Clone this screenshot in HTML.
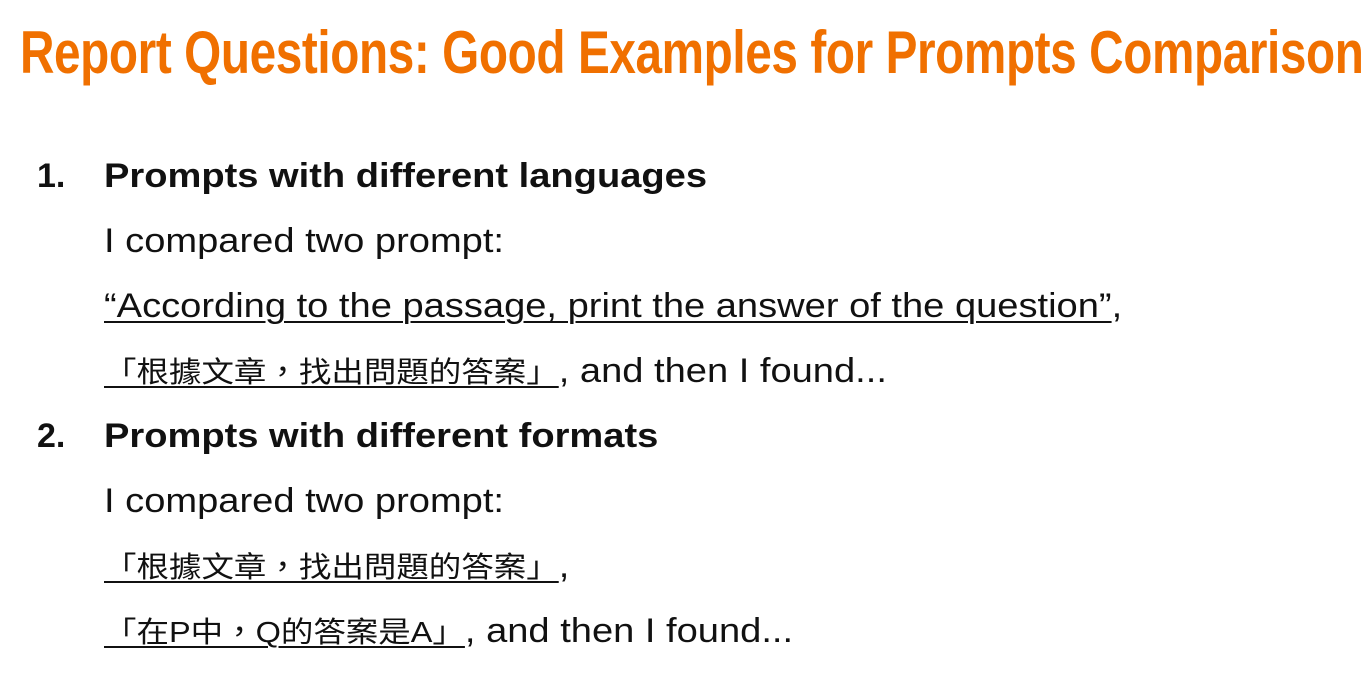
<!DOCTYPE html>
<html><head><meta charset="utf-8"><style>
html,body{margin:0;padding:0;background:#fff;width:1372px;height:680px;overflow:hidden}
.t{position:absolute;left:20px;top:18px;font-family:"Liberation Sans",sans-serif;font-weight:bold;font-size:60px;color:#f07000;white-space:nowrap;transform:scaleX(0.795);transform-origin:0 0;letter-spacing:-0.5px}
.l{position:absolute;left:104px;font-family:"Liberation Sans","Noto Sans CJK TC",sans-serif;font-size:34px;color:#111;white-space:nowrap;line-height:40px;transform:scaleX(1.12);transform-origin:0 0}
.b{font-weight:bold}
.c{font-size:29px}
.n{position:absolute;left:37px;font-family:"Liberation Sans",sans-serif;font-weight:bold;font-size:34px;color:#111;line-height:40px}
u{text-decoration-thickness:2px;text-underline-offset:4px}
</style></head><body>
<div class="t">Report Questions: Good Examples for Prompts Comparison</div>
<div class="n" style="top:156px">1.</div>
<div class="l b" style="top:156px">Prompts with different languages</div>
<div class="l" style="top:221px">I compared two prompt:</div>
<div class="l" style="top:286px"><u>“According to the passage, print the answer of the question”</u>,</div>
<div class="l" style="top:351px"><u class="c">「根據文章，找出問題的答案」</u>, and then I found...</div>
<div class="n" style="top:416px">2.</div>
<div class="l b" style="top:416px">Prompts with different formats</div>
<div class="l" style="top:481px">I compared two prompt:</div>
<div class="l" style="top:546px"><u class="c">「根據文章，找出問題的答案」</u>,</div>
<div class="l" style="top:611px"><u class="c">「在P中，Q的答案是A」</u>, and then I found...</div>
</body></html>
